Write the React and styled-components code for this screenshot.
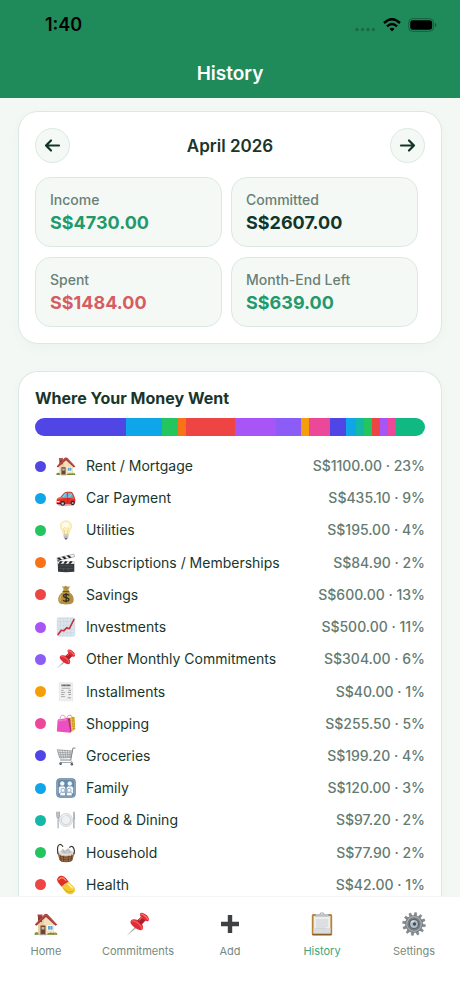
import React from "react";
import styled, { createGlobalStyle } from "styled-components";

const GlobalStyle = createGlobalStyle`
  *, *::before, *::after { box-sizing: border-box; }
  body {
    margin: 0;
    background: #f3f8f5;
    font-family: Inter, "Noto Sans", "Liberation Sans", sans-serif;
    color: #18362b;
  }
`;

const Screen = styled.div`
  min-height: 100vh;
  display: flex;
  flex-direction: column;
`;

const Header = styled.header`
  background: #208b5a;
  flex: none;
`;

const StatusBar = styled.div`
  display: flex;
  align-items: center;
  justify-content: space-between;
  height: 50px;
  padding: 0 23px 0 45px;
  color: #000;
`;

const Clock = styled.time`
  font-size: 18px;
  line-height: 20px;
  font-weight: 600;
`;

const StatusIcons = styled.div`
  display: flex;
  align-items: center;
  gap: 7px;
`;

const PageTitle = styled.h1`
  margin: 0;
  height: 48px;
  font-size: 19px;
  line-height: 48px;
  font-weight: 600;
  text-align: center;
  color: #fff;
`;

const Content = styled.main`
  flex: 1;
  display: flex;
  flex-direction: column;
  gap: 27px;
  padding: 13px 18px 0;
`;

const SummaryCard = styled.section`
  background: #fff;
  border: 1px solid #dce9e2;
  border-radius: 20px;
  padding: 16px;
  box-shadow: 0 4px 12px rgba(32, 100, 70, 0.03);
`;

const SpendingCard = styled(SummaryCard)`
  flex: 1;
  display: flex;
  flex-direction: column;
  border-bottom: 0;
  border-radius: 20px 20px 0 0;
  padding-bottom: 1px;
`;

const MonthBar = styled.div`
  display: flex;
  align-items: center;
  justify-content: space-between;
  margin-bottom: 14px;
`;

const MonthName = styled.h2`
  margin: 0;
  font-size: 17px;
  line-height: 20px;
  font-weight: 600;
`;

const RoundButton = styled.button`
  display: grid;
  place-items: center;
  width: 35px;
  height: 35px;
  padding: 0;
  border: 1px solid #dce9e2;
  border-radius: 50%;
  background: #f4f9f6;
  color: #12352a;
  cursor: pointer;
`;

const Tiles = styled.dl`
  display: grid;
  grid-template-columns: 1fr 1fr;
  gap: 10px 9px;
  margin: 0;
  padding-right: 7px;
`;

const Tile = styled.div`
  height: 70px;
  padding: 13px 14px;
  border: 1px solid #dce9e2;
  border-radius: 16px;
  background: #f4f9f6;
`;

const TileLabel = styled.dt`
  font-size: 14px;
  line-height: 18px;
  font-weight: 500;
  color: #6a7f76;
`;

const TileValue = styled.dd`
  margin: 3px 0 0;
  font-size: 18px;
  line-height: 22px;
  font-weight: 700;
  color: ${(p) => p.$color};
`;

const SectionTitle = styled.h2`
  margin: 0 0 10px;
  font-size: 16px;
  line-height: 20px;
  font-weight: 700;
`;

const ShareBar = styled.div`
  display: flex;
  height: 18px;
  flex: none;
  border-radius: 9px;
  overflow: hidden;
  margin-bottom: 20px;
`;

const Share = styled.span`
  flex-basis: 0;
  background: ${(p) => p.$color};
`;

const CategoryList = styled.ul`
  flex: 1;
  display: flex;
  flex-direction: column;
  justify-content: space-between;
  gap: 12px;
  margin: 0;
  padding: 0;
  list-style: none;
`;

const CategoryRow = styled.li`
  display: flex;
  align-items: center;
  height: 20px;
`;

const Dot = styled.span`
  flex: none;
  width: 11px;
  height: 11px;
  border-radius: 50%;
  margin-right: 10px;
  background: ${(p) => p.$color};
`;

const CategoryName = styled.span`
  flex: 1;
  margin-left: 10px;
  font-size: 14px;
  line-height: 20px;
`;

const CategoryAmount = styled.span`
  font-size: 14px;
  line-height: 20px;
  font-weight: 500;
  color: #647b71;
  white-space: nowrap;
`;

const TabBar = styled.nav`
  position: sticky;
  bottom: 0;
  flex: none;
  display: grid;
  grid-template-columns: repeat(5, 1fr);
  height: 100px;
  padding-top: 15px;
  background: #fff;
  border-top: 1px solid #f2f6f4;
`;

const Tab = styled.a`
  display: flex;
  flex-direction: column;
  align-items: center;
  gap: 8px;
  font-size: 11px;
  line-height: 14px;
  text-decoration: none;
  color: ${(p) => (p.$active ? "#3da678" : "#758b81")};
`;

const Glyph = styled.svg`
  display: block;
  flex: none;
  width: ${(p) => p.$size}px;
  height: ${(p) => p.$size}px;
`;

const drawings = {
  house: (
    <>
      <path d="M1 22.5c0-2 1.500-2.500 3-2v-8L12 5l8 7v8c2-.5 3 .5 3 2.500z" fill="#e9cfa3" />
      <path d="M12 4.500 20 12v10.500H10V6z" fill="#f3dfb9" />
      <path d="M4 4h4v6H4z" fill="#8c3a34" />
      <path d="M3.500 2.500h5v2h-5z" fill="#a94a40" />
      <path d="m.8 12.500 9.700-10.300q1.500-1 3 0l9.700 10.300-1.700 1.200L12 5l-9.500 8.700z" fill="#a33a37" />
      <path d="m2 11.800 9-8.600 1.500-.2L22 12" fill="none" stroke="#c9655a" strokeWidth=".7" />
      <rect x="6.500" y="13.500" width="5" height="9" fill="#77442b" />
      <path d="M7.500 15h3v2.500h-3z" fill="#a9bfc6" />
      <path d="M13.300 13.300h6v5.200h-6z" fill="#fff" />
      <path d="M14 14h4.600v3.700H14z" fill="#5fa5d2" />
      <path d="M16.300 14v4" stroke="#d5e7ee" strokeWidth=".5" />
      <path d="M5.500 22h7v1.200h-7z" fill="#9a9c9f" />
      <path d="M.5 22.800q-.3-3 2-2.600 2-.5 2.200 2.600zM13 22.800q.5-2.300 2.500-1.600 1-1.200 2.500 0 1-.8 2.300-.2 2.500-1 3.200 1.800z" fill="#698a32" />
      <circle cx="2.200" cy="21.500" r=".5" fill="#b6bd3d" /><circle cx="21" cy="21.700" r=".6" fill="#d4cc46" />
    </>
  ),
  car: (
    <>
      <ellipse cx="12" cy="20.500" rx="10" ry="1.300" fill="#8c3333" opacity=".35" />
      <path d="M.8 14.500Q1 11.500 5 11l4.500-5Q11 4.500 14 4.500h3.500q2 0 3 2l2 5q1.500 3 .5 6l-1.500 2H2.500L.5 18z" fill="#e92e2a" />
      <path d="M6.500 11 10 7q1-1.200 3-1.200V11zM14.300 5.800h2.500q1.800 0 2.500 1.500l1.200 3.200-6.200.5z" fill="#61bedb" />
      <path d="m8.500 10.800 3.200-4M15.500 10.500l3-3" stroke="#b1e6f1" strokeWidth=".7" />
      <path d="M2 12.500q10-2.500 20-.5" stroke="#ff8a70" strokeWidth="1" fill="none" />
      <path d="M13.800 11v7" stroke="#9f1b1b" strokeWidth=".5" />
      <path d="M.7 15.700h3.500v1.300H.6z" fill="#fff0bd" />
      <path d="M.6 18h4.400v1.500H1.300z" fill="#60191b" />
      <circle cx="8" cy="18.500" r="2.900" fill="#1f2227" /><circle cx="8" cy="18.500" r="1.500" fill="#bcc2c7" />
      <circle cx="20" cy="18" r="2.600" fill="#1f2227" /><circle cx="20" cy="18" r="1.300" fill="#aeb4ba" />
      <path d="M15 12.700h2" stroke="#8f1719" strokeWidth=".6" />
    </>
  ),
  bulb: (
    <>
      <path d="M12 1C7.500 1 4.800 4.200 5.200 8c.3 3.300 3 5 3.700 9.500h6.200c.7-4.500 3.400-6.200 3.700-9.500C19.200 4.200 16.500 1 12 1z" fill="#fbf1bd" stroke="#e3d495" strokeWidth=".5" />
      <ellipse cx="11.500" cy="7" rx="4.300" ry="4.700" fill="#fffbe5" />
      <path d="m10.500 17-1.300-7 1.300-1 1.500 1.500L13.500 9l1.300 1-1.300 7" fill="none" stroke="#e7ba57" strokeWidth=".6" />
      <path d="M9 17.300h6l-.5 4.200-1.500 1.700h-2l-1.500-1.700z" fill="#a6a7a5" />
      <path d="M9 18.500h6M9.300 20.300h5.200" stroke="#ecece8" strokeWidth=".7" />
      <path d="M10.500 22h3l-.8 1.300h-1.400z" fill="#55585c" />
    </>
  ),
  clapper: (
    <>
      <path d="M2 10h20v12.500q-10 1-19.500 0z" fill="#36393b" />
      <path d="m1 6 20.500-4.700.8 3.200L2 9.300z" fill="#f3f4f4" stroke="#444" strokeWidth=".4" />
      <path d="m4 5.400 3.200 2.700-2.700.7L1.300 6.100zM9.700 4l3.200 2.700-2.700.7L7 4.700zM15.500 2.700l3.200 2.700-2.700.7-3.200-2.800z" fill="#1d1f20" />
      <path d="M2 9.800h20.500V13H2z" fill="#f0f1f1" />
      <path d="M5 9.800h3L5.700 13h-3zM11 9.800h3L11.700 13h-3zM17 9.800h3L17.700 13h-3z" fill="#1d1f20" />
      <path d="M4 15.500h16M4 18.500h16M9 18.500v3M15 18.500v3" stroke="#656a6c" strokeWidth=".5" />
      <circle cx="3" cy="9" r="1.400" fill="#64686b" />
    </>
  ),
  bag: (
    <>
      <path d="m7.500 1.200 2 1 2-1.200 2.500 1.200 2.500-.8-1.800 5 1 2c4 2.500 6 6 5.500 10-.3 3.600-3 5-9.200 5s-9-1.400-9.300-5c-.5-4 1.500-7.500 5.500-10l1-2z" fill="#b2903f" />
      <path d="M8 2q1.500 5 4 5.500 3-1 4-5" fill="none" stroke="#dbc16e" strokeWidth=".9" />
      <path d="M6.300 12Q3.800 16 5 20" fill="none" stroke="#e2c66f" strokeWidth="1.500" opacity=".7" />
      <path d="M8.500 7.500h7" stroke="#725923" strokeWidth="1.500" strokeLinecap="round" />
      <path d="M15.500 12.500c-1-1.500-6.500-1.800-6.500.7 0 2.800 6.500 1.400 6.500 4.300 0 2.500-5.500 2.500-7 .6M12.200 9.700v11" fill="none" stroke="#35301e" strokeWidth="1.600" />
    </>
  ),
  chart: (
    <>
      <rect x="1.500" y="1" width="21" height="22" rx="1" fill="#dce6ef" stroke="#b7c7d3" strokeWidth=".5" />
      <path d="M5 1v22M9.300 1v22M13.500 1v22M17.700 1v22M1.500 5.500h21M1.500 10h21M1.500 14.500h21M1.500 19h21" stroke="#bacbd8" strokeWidth=".5" />
      <path d="m2.500 21 3.800-5 3 .6 3.700-3.800 3 1.200L21.500 3" fill="none" stroke="#c52e36" strokeWidth="1.900" strokeLinejoin="round" strokeLinecap="round" />
    </>
  ),
  pin: (
    <>
      <path d="m10.500 13.500 1.200 1.200L1 23.500z" fill="#8c969c" />
      <path d="m10.700 13.700-9 9" stroke="#d4dade" strokeWidth=".5" />
      <path d="M5 8.500q-2 2.500 3.200 6.800 5.300 4.200 8.100 2.300 1.800-2-.5-5.800l3-3.200q3.500 1.600 4.100-.6Q23.300 5 19.800 2.500T14.500 1q-1.500 1 .5 4l-3.300 3Q7 6.500 5 8.500z" fill="#df2c36" />
      <path d="M15 5q2 2.800 4.500 3.500l-3.700 3.900q-3-1-4.200-4.200z" fill="#ac1f2b" />
      <path d="M5.700 9q3.300-.8 7 2.700 3.600 3.700 2.800 5.400" fill="none" stroke="#f35c5b" strokeWidth="1.300" />
      <path d="M15 2.200q3.200.2 6.700 5" fill="none" stroke="#ff7770" strokeWidth="1.300" strokeLinecap="round" />
      <path d="m13 8.400 3-3" stroke="#f16562" strokeWidth="1.100" />
    </>
  ),
  receipt: (
    <>
      <path d="M4 1h16v22l-1.600-1.200-1.600 1.200-1.600-1.200-1.600 1.200-1.600-1.200-1.600 1.200-1.600-1.200L7.200 23l-1.600-1.200L4 23z" fill="#eff0ef" stroke="#d5d7d6" strokeWidth=".5" />
      <path d="M6.500 4h11" stroke="#555958" strokeWidth="2" strokeDasharray="1.300 .3" />
      <path d="M7 7.500h10M6 10h3M6 12.500h5M6 15h4M6 17.500h5" stroke="#929795" strokeWidth=".9" />
      <path d="M15 10h3M14 12.500h4M15 15h3M14 19h4" stroke="#7b817e" strokeWidth=".9" />
    </>
  ),
  shopping: (
    <>
      <path d="m11 5 11-1.500 1 14.500-6 4.500z" fill="#eeb934" />
      <path d="m18.500 4 3.500-.5 1 14.500-3 2.500z" fill="#d19a26" />
      <path d="M13 7h8M13 10h9M15 13h7M16 16h7M17 19h4" stroke="#ffe277" strokeWidth=".9" strokeDasharray="1.500 1" />
      <path d="M13 5c0-4 6-5 6.500-1" fill="none" stroke="#c79a39" strokeWidth="1" />
      <path d="m2 6.500 12-1.700 3 17.700L1 21z" fill="#eb4fc1" />
      <path d="m14 4.800 3 .7 1.500 15-1.500 2z" fill="#ae2e8f" />
      <path d="m3 8 10-1.200" stroke="#ff91dc" strokeWidth=".8" />
      <path d="M5 9V4.500C5.500.5 11 .5 11 4.500V8" fill="none" stroke="#d994bd" strokeWidth="1.100" />
    </>
  ),
  cart: (
    <>
      <path d="M22.800 2.500h-2.500l-2.600 14.300H5.500" fill="none" stroke="#7d8489" strokeWidth="1.200" strokeLinecap="round" />
      <path d="M1.500 4.500 19.500 6l-1.700 7.800L4.500 14.500z" fill="#e7e9ea" stroke="#747b80" strokeWidth=".8" />
      <path d="m4.300 4.800 2.200 9.500M7.500 5l1.600 9.200M10.700 5.300l1 8.800M13.800 5.600l.4 8.300M17 5.800l-.6 8M2.300 7.600l16.700.7M3 10l15.500.3M3.800 12.400l14.300-.2" stroke="#858c90" strokeWidth=".7" />
      <path d="m17 16.800 3 3H4.500" fill="none" stroke="#92999d" strokeWidth="1" />
      <circle cx="5.500" cy="21.300" r="1.500" fill="#44494d" /><circle cx="19" cy="21.800" r="1.500" fill="#44494d" />
      <circle cx="5.500" cy="21.300" r=".5" fill="#d1d5d8" /><circle cx="19" cy="21.800" r=".5" fill="#d1d5d8" />
    </>
  ),
  family: (
    <>
      <rect x=".7" y=".7" width="22.600" height="22.600" rx="4" fill="#6688a8" stroke="#587a98" strokeWidth=".7" />
      <rect x="1.800" y="1.800" width="20.400" height="20.400" rx="3" fill="none" stroke="#a9bfd0" strokeWidth=".6" />
      <g fill="#f6f9fc" stroke="#55789a" strokeWidth=".6">
        <path d="M3 19v-6.500q0-3 3-3h3q2.700 0 2.700 3V19zM12.300 19v-6.500q0-3 2.700-3h3q3 0 3 3V19z" />
        <circle cx="7.500" cy="6.700" r="3" /><circle cx="16.500" cy="6.700" r="3" />
        <path d="M4.700 21.300V19q0-2 2-2h2.800q2 0 2 2v2.300zM12.500 21.300V19q0-2 2-2h2.800q2 0 2 2v2.300z" />
        <circle cx="8.200" cy="14.800" r="2.400" /><circle cx="15.800" cy="14.800" r="2.400" />
      </g>
    </>
  ),
  dining: (
    <>
      <circle cx="12" cy="12" r="8" fill="#e5e8eb" stroke="#c4cacf" strokeWidth=".6" />
      <circle cx="12" cy="12" r="5.500" fill="#eff1f3" stroke="#c4cacf" strokeWidth=".8" />
      <path d="M6.500 9Q9 5.500 13 5.700" fill="none" stroke="#fff" strokeWidth=".9" />
      <path d="M1 2.500V8q0 1.500 1.500 1.500T4 8V2.500M2.500 2.500v19" fill="none" stroke="#8b969e" strokeWidth="1.100" strokeLinecap="round" />
      <path d="M21.500 2.500v19" stroke="#8b969e" strokeWidth="1.300" strokeLinecap="round" />
      <path d="M21.500 2q1.700 3 1.300 10h-1.300z" fill="#aab3ba" />
    </>
  ),
  basket: (
    <>
      <path d="M2 12h20l-2 8q-1 3-8 3t-8-3z" fill="#805331" />
      <path d="M3 12q1-4 9-4t9 4-9 4-9-4z" fill="#e3e2de" />
      <path d="m5 11 3-4 3 2 4-3 3 4 3 1q-8 5-16 0z" fill="#c9cbc9" />
      <path d="m8 8 2 4 4-4 3 4" fill="none" stroke="#979e9e" strokeWidth=".6" />
      <path d="M3 13q9 5 18 0M3.500 16q8.500 5 17 0M4 19q8 5 16 0" fill="none" stroke="#b9875d" strokeWidth=".9" strokeDasharray="2 1" />
      <path d="m5 14 1 7M9 15.500l.5 7M15 15.500l-.5 7M19 14l-1 7" stroke="#56331f" strokeWidth=".8" />
      <path d="M2.500 13.500Q.5 3 4.500 1.800q2-.3 4 2.700M21.500 13.500q1.700-6-1.500-9-2-1.400-4 1" fill="none" stroke="#40382b" strokeWidth="1.500" />
    </>
  ),
  pill: (
    <>
      <path d="M2.200 3.200C5-.2 9 .6 12 4l3 3.800-8.500 6-3.300-4C1 7.200.8 4.700 2.200 3.200z" fill="#df3028" />
      <path d="m15 7.800 6.300 6.400c3.500 4 .5 8.800-4.300 8.800-3 0-5-1.500-7-4.500l-3.500-4.700q5-.8 8.500-6z" fill="#f4ca31" />
      <path d="m3.300 5.500 2.500-2q3-1 6 3" fill="none" stroke="#ff8c73" strokeWidth="1.500" strokeLinecap="round" />
      <path d="m15 11 4.500 4.500" stroke="#fff1a0" strokeWidth="2" strokeLinecap="round" />
      <path d="M6.500 13.800q5-.8 8.500-6" fill="none" stroke="#b95e1d" strokeWidth=".5" />
      <path d="M9 16q5 6.500 11 3.500" fill="none" stroke="#c69b1c" strokeWidth="1" />
    </>
  ),
  plus: <path d="M9.800 3h4.400v6.800H21v4.400h-6.800V21H9.800v-6.800H3V9.800h6.800z" fill="#404143" />,
  clipboard: (
    <>
      <rect x="1.800" y="2" width="20.400" height="21.500" rx="1.500" fill="#ba8437" />
      <path d="M2.500 22.700h19" stroke="#825520" strokeWidth="1" />
      <path d="M3.600 4h16.800v17.300H3.600z" fill="#eceded" />
      <path d="M3.600 16h16.800v5.300H3.600z" fill="#dadddf" />
      <path d="M6 8h12M6 10h12M6 12h12M6 14h12M6 16h10" stroke="#c6c9cb" strokeWidth=".8" />
      <path d="M5 4.500V3q0-1 2-1h2.500Q10 .3 12 .3t2.500 1.700H17q2 0 2 1v1.500z" fill="#a6adb0" />
      <path d="M6 3h12" stroke="#e5e8e9" strokeWidth=".7" /><circle cx="12" cy="1.800" r=".7" fill="#fff" />
    </>
  ),
  gear: (
    <>
      {Array.from({ length: 12 }, (_, i) => (
        <path key={i} d="m10.700 4 .4-3.500h2l.5 3.500z" fill="#858b8e" stroke="#62686c" strokeWidth=".3" transform={`rotate(${i * 30 + 8} 12 12)`} />
      ))}
      <circle cx="12" cy="12" r="8.800" fill="#777e82" />
      <circle cx="12" cy="12" r="7.300" fill="none" stroke="#a8aeb1" strokeWidth="1.200" />
      <circle cx="12" cy="12" r="5" fill="#596269" />
      <circle cx="12" cy="12" r="3.900" fill="#b2bdc7" />
      <circle cx="12.500" cy="12" r="1.700" fill="#454d54" />
      <path d="M9 10.500Q10 9 12 9" fill="none" stroke="#fff" strokeWidth=".9" />
    </>
  ),
};

function Pictogram({ name, size }) {
  return <Glyph $size={size} viewBox="0 0 24 24" aria-hidden="true">{drawings[name]}</Glyph>;
}

const tiles = [
  ["Income", "S$4730.00", "#22996a"],
  ["Committed", "S$2607.00", "#12352a"],
  ["Spent", "S$1484.00", "#d65c61"],
  ["Month-End Left", "S$639.00", "#22996a"],
];

const categories = [
  ["Rent / Mortgage", "S$1100.00 · 23%", "#4f46e5", "house"],
  ["Car Payment", "S$435.10 · 9%", "#0ea5e9", "car"],
  ["Utilities", "S$195.00 · 4%", "#22c55e", "bulb"],
  ["Subscriptions / Memberships", "S$84.90 · 2%", "#f97316", "clapper"],
  ["Savings", "S$600.00 · 13%", "#ef4444", "bag"],
  ["Investments", "S$500.00 · 11%", "#a855f7", "chart"],
  ["Other Monthly Commitments", "S$304.00 · 6%", "#8b5cf6", "pin"],
  ["Installments", "S$40.00 · 1%", "#f59e0b", "receipt"],
  ["Shopping", "S$255.50 · 5%", "#ec4899", "shopping"],
  ["Groceries", "S$199.20 · 4%", "#4f46e5", "cart"],
  ["Family", "S$120.00 · 3%", "#0ea5e9", "family"],
  ["Food & Dining", "S$97.20 · 2%", "#14b8a6", "dining"],
  ["Household", "S$77.90 · 2%", "#22c55e", "basket"],
  ["Health", "S$42.00 · 1%", "#ef4444", "pill"],
];

const shares = [
  [91, "#4f46e5"], [36, "#0ea5e9"], [16, "#22c55e"], [8, "#f97316"],
  [49, "#ef4444"], [41, "#a855f7"], [25, "#8b5cf6"], [8, "#f59e0b"],
  [21, "#ec4899"], [16, "#4f46e5"], [10, "#0ea5e9"], [8, "#14b8a6"],
  [8, "#22c55e"], [8, "#ef4444"], [8, "#a855f7"], [8, "#ec4899"],
  [29, "#10b981"],
];

const tabs = [
  ["Home", "house"],
  ["Commitments", "pin"],
  ["Add", "plus"],
  ["History", "clipboard"],
  ["Settings", "gear"],
];

function Arrow({ back }) {
  return (
    <svg width="17" height="17" viewBox="0 0 17 17" fill="none" stroke="currentColor" strokeWidth="2.200" strokeLinecap="round" strokeLinejoin="round" aria-hidden="true">
      <path d={back ? "M15 8.500H2M7 3.500l-5 5 5 5" : "M2 8.500h13M10 3.500l5 5-5 5"} />
    </svg>
  );
}

export default function App() {
  return (
    <Screen>
      <GlobalStyle />
      <Header>
        <StatusBar>
          <Clock>1:40</Clock>
          <StatusIcons aria-hidden="true">
            <svg width="21" height="14" viewBox="0 0 21 14" fill="#176b45">
              <circle cx="2" cy="11.500" r="1.700" /><circle cx="7.500" cy="11.500" r="1.700" />
              <circle cx="13" cy="11.500" r="1.700" /><circle cx="18.500" cy="11.500" r="1.700" />
            </svg>
            <svg width="18" height="14" viewBox="0 0 18 14" fill="none" stroke="#000" strokeWidth="2.400">
              <path d="M1 5q8-7.500 16 0M4 8.300q5-4.500 10 0" />
              <path d="m6.500 10.800 2.500 2.700 2.500-2.700q-2.500-2-5 0z" fill="#000" stroke="none" />
            </svg>
            <svg width="29" height="14" viewBox="0 0 29 14">
              <rect x=".7" y=".7" width="25" height="12.600" rx="4" fill="none" stroke="#145f3d" strokeWidth="1" />
              <rect x="2.200" y="2.200" width="22" height="9.600" rx="2.700" fill="#000" />
              <path d="M27 5v4q1.500-.5 1.500-2T27 5z" fill="#145f3d" />
            </svg>
          </StatusIcons>
        </StatusBar>
        <PageTitle>History</PageTitle>
      </Header>
      <Content>
        <SummaryCard>
          <MonthBar>
            <RoundButton type="button" aria-label="Previous month"><Arrow back /></RoundButton>
            <MonthName>April 2026</MonthName>
            <RoundButton type="button" aria-label="Next month"><Arrow /></RoundButton>
          </MonthBar>
          <Tiles>
            {tiles.map(([label, value, color]) => (
              <Tile key={label}>
                <TileLabel>{label}</TileLabel>
                <TileValue $color={color}>{value}</TileValue>
              </Tile>
            ))}
          </Tiles>
        </SummaryCard>
        <SpendingCard>
          <SectionTitle>Where Your Money Went</SectionTitle>
          <ShareBar aria-hidden="true">
            {shares.map(([weight, color], i) => (
              <Share key={i} $color={color} style={{ flexGrow: weight }} />
            ))}
          </ShareBar>
          <CategoryList>
            {categories.map(([name, amount, color, icon]) => (
              <CategoryRow key={name}>
                <Dot $color={color} />
                <Pictogram name={icon} size={20} />
                <CategoryName>{name}</CategoryName>
                <CategoryAmount>{amount}</CategoryAmount>
              </CategoryRow>
            ))}
          </CategoryList>
        </SpendingCard>
      </Content>
      <TabBar aria-label="Main">
        {tabs.map(([label, icon]) => (
          <Tab key={label} href={`#${label.toLowerCase()}`} $active={label === "History"} aria-current={label === "History" ? "page" : undefined}>
            <Pictogram name={icon} size={24} />
            <span>{label}</span>
          </Tab>
        ))}
      </TabBar>
    </Screen>
  );
}
